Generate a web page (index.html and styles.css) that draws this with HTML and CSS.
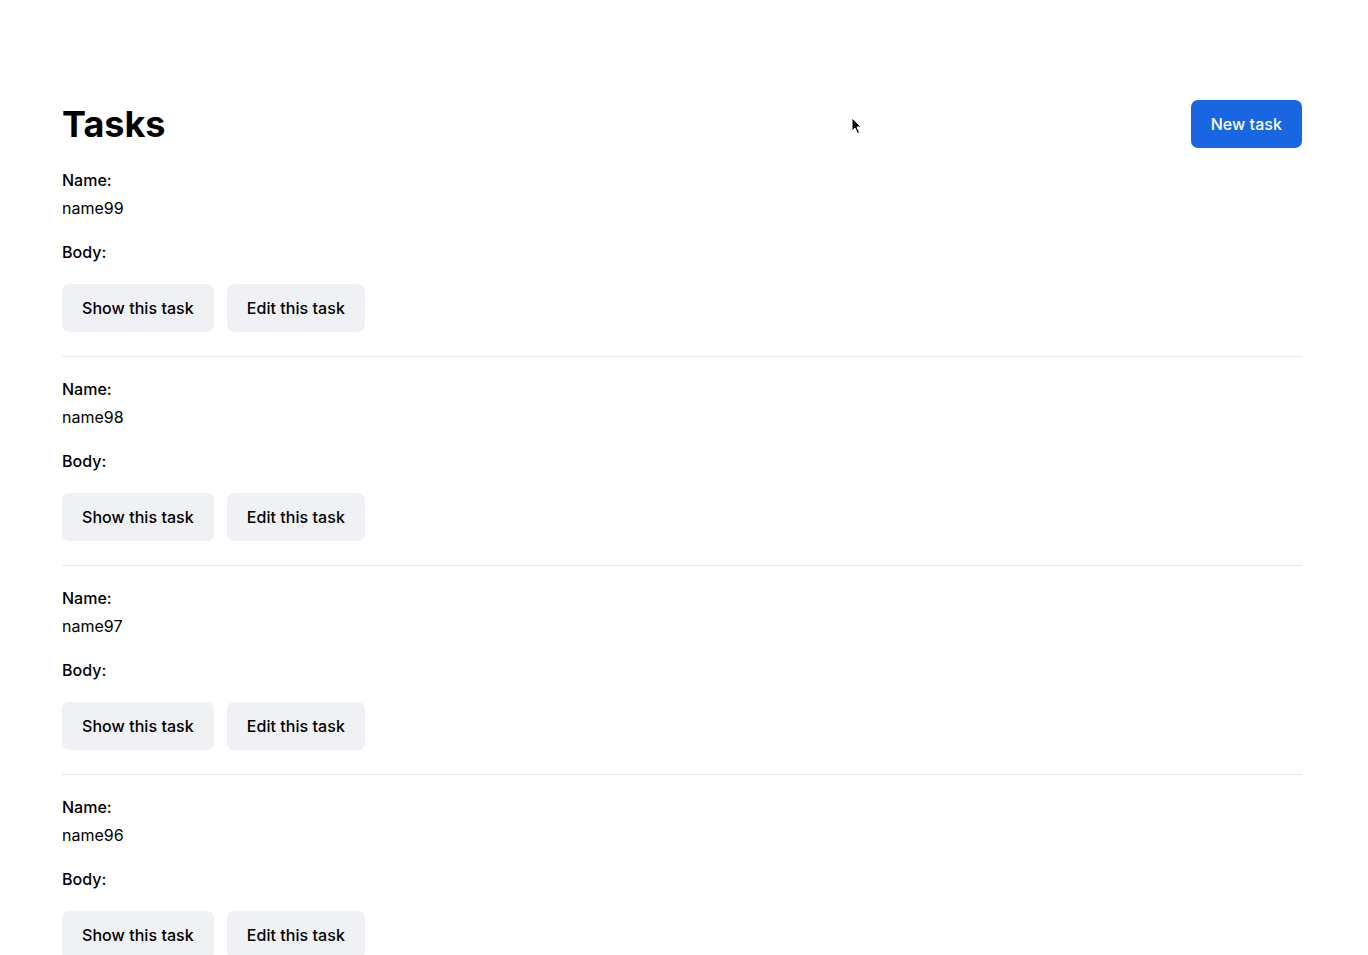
FILE: index.html
```html
<!DOCTYPE html>
<html lang="en">
<head>
<meta charset="utf-8">
<title>Tasks</title>
<link rel="stylesheet" href="styles.css">
</head>
<body>
<main class="container">
  <div class="header">
    <h1 class="title">Tasks</h1>
    <a class="btn btn-primary" href="#">New task</a>
  </div>
  <div class="tasks">
    <div class="task">
      <div class="field"><strong class="label">Name:</strong><p class="value">name99</p></div>
      <div class="field"><strong class="label">Body:</strong><p class="value"></p></div>
      <div class="actions"><a class="btn btn-gray" href="#">Show this task</a><a class="btn btn-gray" href="#">Edit this task</a></div>
    </div>
    <div class="task">
      <div class="field"><strong class="label">Name:</strong><p class="value">name98</p></div>
      <div class="field"><strong class="label">Body:</strong><p class="value"></p></div>
      <div class="actions"><a class="btn btn-gray" href="#">Show this task</a><a class="btn btn-gray" href="#">Edit this task</a></div>
    </div>
    <div class="task">
      <div class="field"><strong class="label">Name:</strong><p class="value">name97</p></div>
      <div class="field"><strong class="label">Body:</strong><p class="value"></p></div>
      <div class="actions"><a class="btn btn-gray" href="#">Show this task</a><a class="btn btn-gray" href="#">Edit this task</a></div>
    </div>
    <div class="task">
      <div class="field"><strong class="label">Name:</strong><p class="value">name96</p></div>
      <div class="field"><strong class="label">Body:</strong><p class="value"></p></div>
      <div class="actions"><a class="btn btn-gray" href="#">Show this task</a><a class="btn btn-gray" href="#">Edit this task</a></div>
    </div>
  </div>
</main>
<svg class="cursor" width="12" height="18" viewBox="0 0 12 18"><path d="M1 1 L1 14 L4 11 L6.5 16.5 L8.5 15.5 L6 10 L10 10 Z" fill="#000" stroke="#fff" stroke-width="1"/></svg>
</body>
</html>
```
FILE: styles.css
```css
html, body {
  margin: 0;
  padding: 0;
  background: #fff;
}
body {
  font-family: Inter, "Noto Sans", sans-serif;
  font-size: 16px;
  line-height: 24px;
  color: #000;
  position: relative;
  height: 955px;
  overflow: hidden;
}
.container {
  padding: 100px 66px 0 62px;
}
.header {
  display: flex;
  justify-content: space-between;
  align-items: center;
}
.title {
  margin: 0;
  font-size: 36px;
  line-height: 40px;
  font-weight: 700;
  color: #000;
}
.btn {
  display: inline-block;
  padding: 12px 20px;
  border-radius: 7px;
  font-weight: 500;
  text-decoration: none;
  font-size: 16px;
  line-height: 24px;
  letter-spacing: 0.05px;
}
.btn-primary {
  background: #1866e1;
  color: #fff;
}
.btn-gray {
  background: #f0f1f5;
  color: #000;
}
.tasks {
  padding-top: 20px;
}
.task {
  padding: 0 0 24px;
  border-bottom: 1px solid #e5e7eb;
  margin-bottom: 20px;
  display: flex;
  flex-direction: column;
  gap: 20px;
}
.field {
  display: flex;
  flex-direction: column;
  gap: 4px;
}
.label {
  display: block;
  font-weight: 500;
}
.value {
  margin: 0;
}
.value:empty {
  display: none;
}
.actions {
  display: flex;
  gap: 13px;
}
.cursor {
  position: absolute;
  left: 851px;
  top: 117px;
}
```
